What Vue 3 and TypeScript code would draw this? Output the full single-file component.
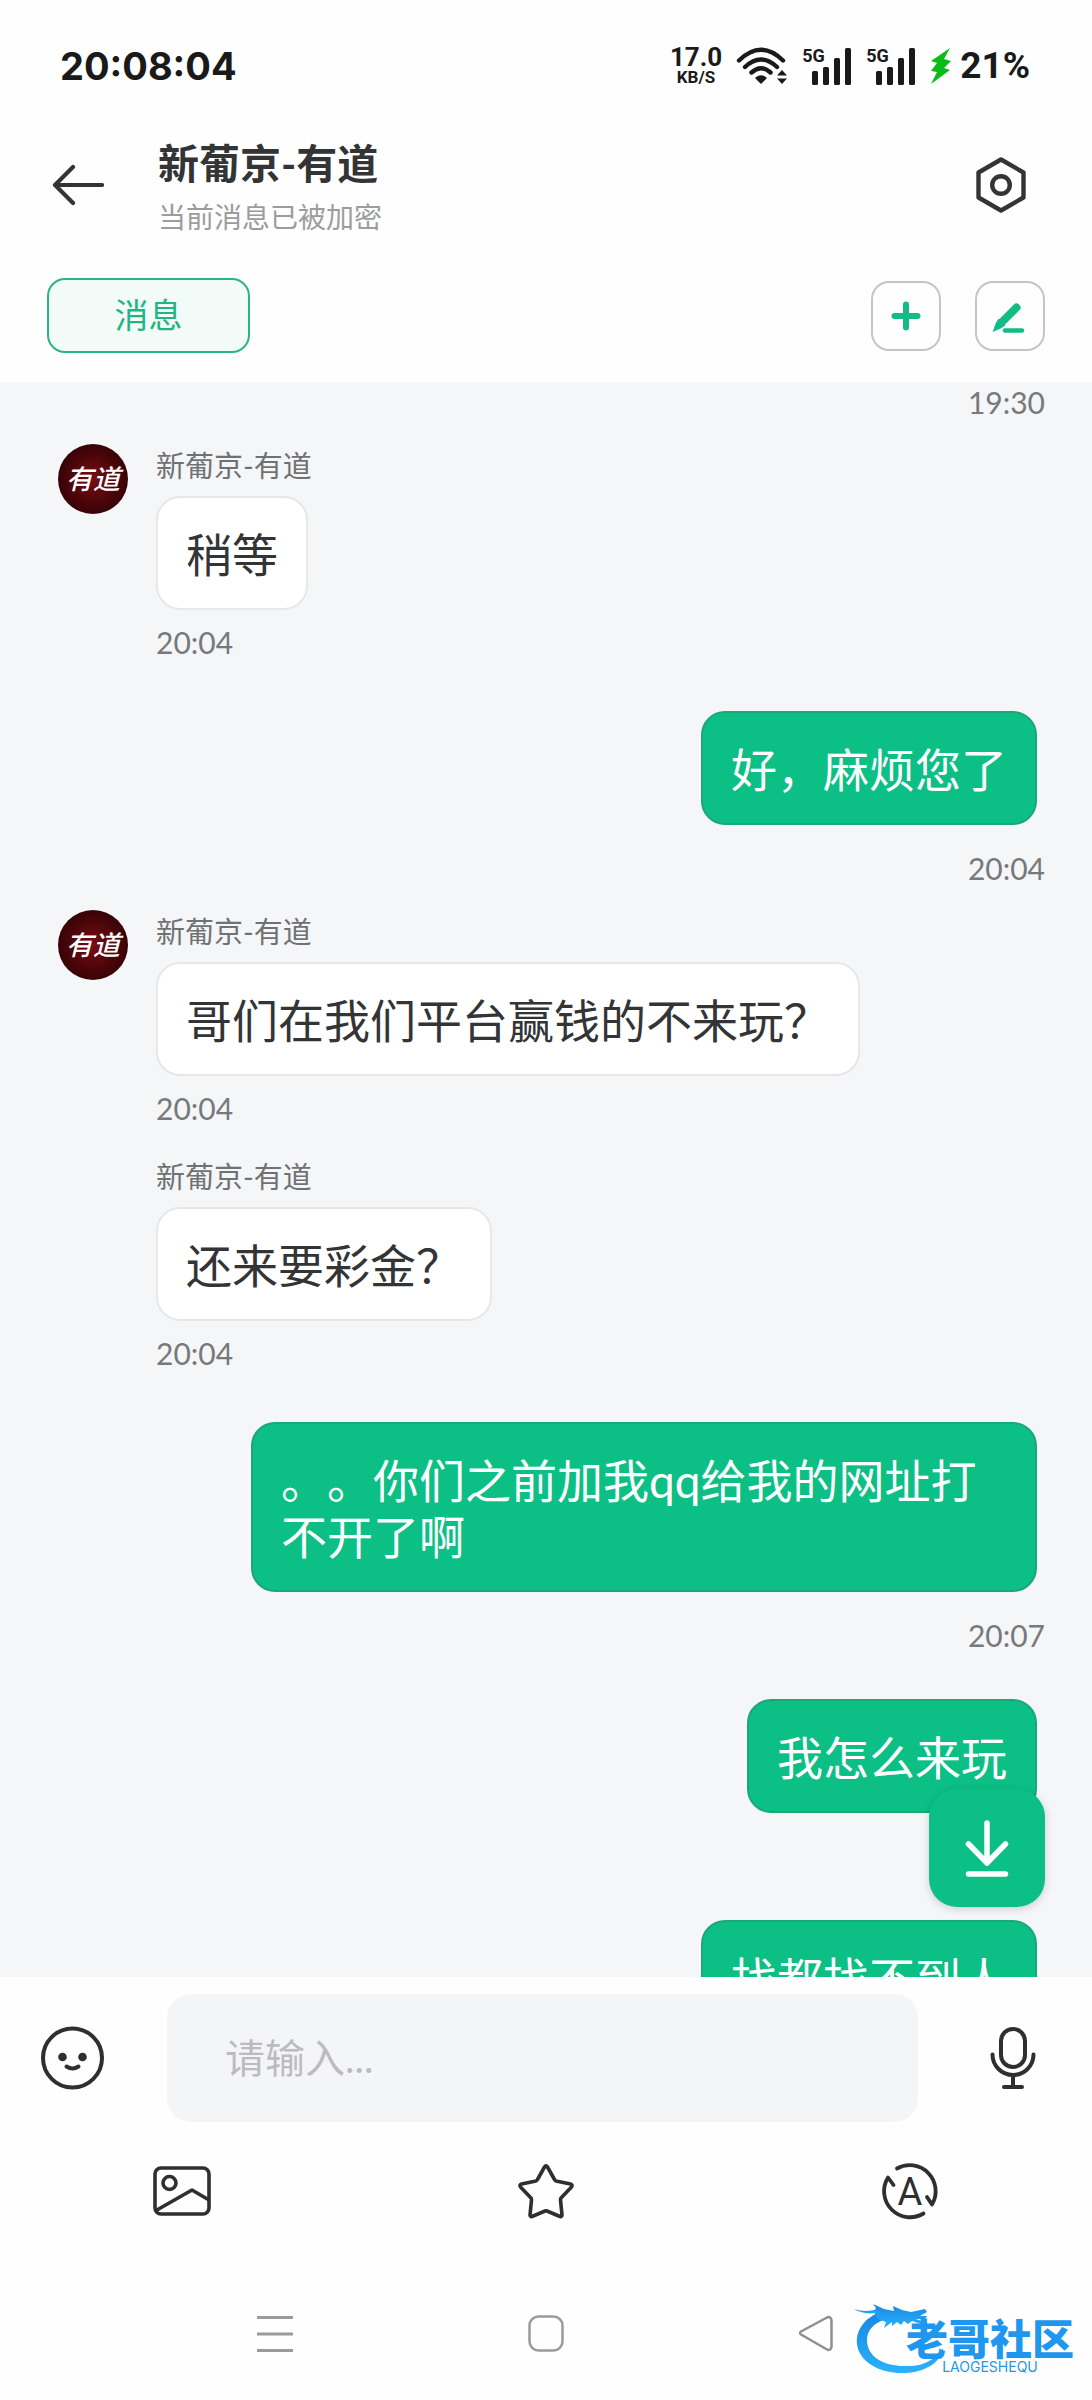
<script setup lang="ts">
import { ref } from 'vue'

interface Message {
  id: number
  side: 'in' | 'out'
  text?: string
  time?: string
  avatar?: boolean
}

const contact = '新葡京-有道'
const draft = ref('')

const messages: Message[] = [
  { id: 1, side: 'out', time: '19:30' },
  { id: 2, side: 'in', text: '稍等', time: '20:04', avatar: true },
  { id: 3, side: 'out', text: '好，麻烦您了', time: '20:04' },
  { id: 4, side: 'in', text: '哥们在我们平台赢钱的不来玩？', time: '20:04', avatar: true },
  { id: 5, side: 'in', text: '还来要彩金？', time: '20:04' },
  { id: 6, side: 'out', text: '。。你们之前加我qq给我的网址打不开了啊', time: '20:07' },
  { id: 7, side: 'out', text: '我怎么来玩' },
  { id: 8, side: 'out', text: '找都找不到人' },
]
</script>

<template>
  <div class="app">
    <div class="status">
      <time class="clock">20:08:04</time>
      <div class="indicators">
        <div class="speed"><b>17.0</b><small>KB/S</small></div>
        <svg width="52" height="38" viewBox="0 0 52 38" fill="none" stroke="#1a1a1a" stroke-width="4.4" stroke-linecap="round">
          <path d="M3 13.5Q25 -8 47 13.5M9 20Q25 5 41 20M15.500 25.500Q25 17 34.500 25.500" />
          <path d="M20 31Q25 27 30 31L25 36Z" fill="#1a1a1a" stroke-width="1.500" stroke-linejoin="round" />
          <path d="M41 28.500L46 23l5 5.500zM41 31.500h10L46 37z" fill="#1a1a1a" stroke="none" />
        </svg>
        <div v-for="n in 2" :key="n" class="signal">
          <svg width="50" height="38" viewBox="0 0 50 38" fill="#1a1a1a">
            <rect x="10" y="24" width="6" height="14" rx="1.500" />
            <rect x="21" y="20" width="6" height="18" rx="1.500" />
            <rect x="32" y="11" width="6" height="27" rx="1.500" />
            <rect x="43" y="1" width="6" height="37" rx="1.500" />
          </svg>
          <span class="gen">5G</span>
        </div>
        <div class="power">
          <svg width="22" height="36" viewBox="0 0 22 36" fill="#09bd16">
            <path d="M20 0L1 13l6 2-6 8 6 1-6 12 19-14-6-2 7-7-7-2z" />
          </svg>
          <span class="battery">21%</span>
        </div>
      </div>
    </div>

    <header class="header">
      <button class="icon" aria-label="返回">
        <svg width="52" height="42" viewBox="0 0 52 42" fill="none" stroke="#333436" stroke-width="4.200" stroke-linecap="round" stroke-linejoin="round">
          <path d="M50 21H3M21 3L3 21l18 18" />
        </svg>
      </button>
      <div class="heading">
        <h1>{{ contact }}</h1>
        <p>当前消息已被加密</p>
      </div>
      <button class="icon" aria-label="设置">
        <svg width="52" height="56" viewBox="0 0 52 56" fill="none" stroke="#333436" stroke-width="4.400" stroke-linejoin="round">
          <path d="M26 2.500L48.500 15.500V40.500L26 53.500L3.500 40.500V15.500Z" />
          <circle cx="26" cy="28" r="8.800" />
        </svg>
      </button>
    </header>

    <nav class="tabs">
      <button class="tab">消息</button>
      <button class="square" aria-label="添加">
        <svg width="66" height="66" viewBox="0 0 66 66" stroke="#12bc84" stroke-width="6" stroke-linecap="round">
          <path d="M33 21.500v23M21.500 33h23" />
        </svg>
      </button>
      <button class="square" aria-label="编辑">
        <svg width="66" height="66" viewBox="0 0 66 66" stroke="#12bc84" stroke-linecap="round">
          <path d="M39.500 24.500L25 39" stroke-width="8" />
          <path d="M16.500 48L19.500 39.500L22 36L28 42L24.500 44.500Z" fill="#12bc84" stroke-width="1" stroke-linejoin="round" />
          <path d="M28 47.500h17" stroke-width="4.500" />
        </svg>
      </button>
    </nav>

    <main class="chat">
      <div class="messages">
        <article v-for="m in messages" :key="m.id" class="row" :class="m.side">
          <div v-if="m.side === 'in'" class="side">
            <div v-if="m.avatar" class="avatar">有道</div>
          </div>
          <div class="body">
            <div v-if="m.side === 'in'" class="name">{{ contact }}</div>
            <p v-if="m.text" class="bubble">{{ m.text }}</p>
            <div class="time"><time v-if="m.time">{{ m.time }}</time></div>
          </div>
        </article>
      </div>
      <button class="jump" aria-label="跳到最新">
        <svg width="116" height="118" viewBox="0 0 116 118" fill="none" stroke="#fff" stroke-width="5.500" stroke-linecap="round" stroke-linejoin="round">
          <path d="M58 34v40M39.500 55L58 74l18.500-19M39.500 85h37" />
        </svg>
      </button>
    </main>

    <footer>
      <form class="composer" @submit.prevent>
        <button type="button" class="icon" aria-label="表情">
          <svg width="64" height="64" viewBox="0 0 64 64" fill="none" stroke="#2f2f30" stroke-width="4">
            <circle cx="32.500" cy="32" r="29.500" />
            <circle cx="22.500" cy="31" r="4.300" fill="#2f2f30" stroke="none" />
            <circle cx="42.500" cy="31" r="4.300" fill="#2f2f30" stroke="none" />
            <path d="M26.500 40.500Q32.500 44.500 38.500 40.500" stroke-linecap="round" />
          </svg>
        </button>
        <input v-model="draft" class="field" type="text" placeholder="请输入..." aria-label="消息内容" />
        <button type="button" class="icon" aria-label="语音">
          <svg width="64" height="64" viewBox="0 0 64 64" fill="none" stroke="#2f2f30" stroke-width="4" stroke-linecap="round">
            <rect x="20" y="3" width="24" height="38" rx="12" />
            <path d="M11.500 28.500a20.500 20.500 0 0 0 41 0M32 49v12M23 61h18" />
          </svg>
        </button>
      </form>
      <div class="tools">
        <button class="icon" aria-label="图片">
          <svg width="60" height="52" viewBox="0 0 60 52" fill="none" stroke="#2f2f30" stroke-width="3.600" stroke-linejoin="round">
            <rect x="3" y="3" width="54" height="46" rx="6" />
            <circle cx="17.500" cy="18" r="6.500" />
            <path d="M4 45.500L40 25l17 10" />
          </svg>
        </button>
        <button class="icon" aria-label="收藏">
          <svg width="60" height="60" viewBox="0 0 60 60" fill="none" stroke="#2f2f30" stroke-width="3.600" stroke-linecap="round" stroke-linejoin="round">
            <path d="M28.500 6Q30 3.500 31.500 6L38.500 18.500Q39 19.500 40 20L54.500 23Q57 23.800 55.500 26L45 37Q44.500 37.800 44.500 39L46 54Q45.800 56 44 55.500L31 50Q30 49.600 29 50L16 55.500Q14.200 56 14 54L15.500 39Q15.500 37.800 15 37L4.500 26Q3 23.800 5.500 23L20 20Q21 19.500 21.500 18.500Z" />
          </svg>
        </button>
        <button class="icon" aria-label="翻译">
          <svg width="60" height="60" viewBox="0 0 60 60" fill="none" stroke="#2f2f30" stroke-width="3.800" stroke-linecap="round" stroke-linejoin="round">
            <path d="M17 7.500A26 26 0 0 1 52 43.500L47 36" />
            <path d="M43.500 52.500A26 26 0 0 1 8 16.500L13.500 24" />
            <text x="30" y="44" text-anchor="middle" class="letter">A</text>
          </svg>
        </button>
      </div>
      <div class="system">
        <button class="icon" aria-label="最近任务">
          <svg width="36" height="38" viewBox="0 0 36 38" stroke="#9a9a9a" stroke-width="3"><path d="M0 2.500h36M0 19h36M0 35.500h36" /></svg>
        </button>
        <button class="icon" aria-label="主屏幕">
          <svg width="36" height="38" viewBox="0 0 36 38" fill="none" stroke="#9a9a9a" stroke-width="2.500"><rect x="1.500" y="1.500" width="33" height="34" rx="9" /></svg>
        </button>
        <button class="icon" aria-label="后退">
          <svg width="36" height="38" viewBox="0 0 36 38" fill="none" stroke="#8f8f8f" stroke-width="2.500" stroke-linejoin="round">
            <path d="M2 16.500Q0 18 2 19.500L28 34.500Q32 36 32.500 31.500V5.500Q32 1 28 2.500Z" />
          </svg>
        </button>
      </div>
    </footer>

    <div class="mark">
      <svg class="dragon" width="92" height="70" viewBox="0 0 92 70">
        <defs>
          <linearGradient id="sky" x1="0" y1="0" x2="0" y2="1">
            <stop offset="0" stop-color="#1688e2" />
            <stop offset="1" stop-color="#2bb2fb" />
          </linearGradient>
        </defs>
        <g fill="url(#sky)">
          <path d="M24 9C8 16 2 28 3 40C5 58 26 70 51 69C73 68 88 57 89 44C80 57 68 63 51 62C28 62 13 52 13 36C13 27 19 19 32 15Z" />
          <path d="M20 8L22 4L19 0L30 5L40 7L39 2L48 6L57 8L71 5L73 8L66 12H73L71 15L62 15L73 19L67 20L58 17L54 20L50 17L47 21L43 18L38 22L38 18L30 24L32 18L24 15Z" />
          <path d="M0 5Q12 9 24 5L27 8Q12 12 0 5Z" />
        </g>
      </svg>
      <div class="brand"><strong>老哥社区</strong><small>LAOGESHEQU</small></div>
    </div>
  </div>
</template>

<style>
body {
  margin: 0;
}
</style>

<style scoped>
.app {
  position: relative;
  display: flex;
  flex-direction: column;
  height: 100vh;
  background: #fefefe;
  color: #333436;
  font-family: Lato, "Noto Sans CJK SC", sans-serif;
  text-spacing-trim: space-all;
}
h1,
p {
  margin: 0;
}
svg {
  display: block;
}
button {
  padding: 0;
  border: 0;
  background: none;
  color: inherit;
  font: inherit;
  cursor: pointer;
}

.status {
  display: flex;
  align-items: center;
  justify-content: space-between;
  box-sizing: border-box;
  height: 124px;
  padding: 8px 62px 0 60px;
  color: #1a1a1a;
}
.clock {
  font: 700 38px/48px Inter, sans-serif;
}
.indicators {
  display: flex;
  align-items: center;
  gap: 14px;
}
.speed {
  display: flex;
  flex-direction: column;
  align-items: center;
  font-family: Roboto, sans-serif;
}
.speed b {
  font-size: 26px;
  line-height: 22px;
}
.speed small {
  font-size: 17px;
  font-weight: 700;
  line-height: 18px;
}
.signal {
  position: relative;
}
.gen {
  position: absolute;
  top: 0;
  left: 0;
  font: 700 18px/18px Roboto, sans-serif;
}
.power {
  display: flex;
  align-items: center;
  gap: 8px;
}
.battery {
  font: 700 37px/48px Roboto, sans-serif;
}

.header {
  display: flex;
  align-items: center;
  gap: 54px;
  height: 122px;
  padding: 0 65px 0 52px;
}
.heading {
  flex: 1;
}
.heading h1 {
  font-size: 41px;
  font-weight: 700;
  line-height: 64px;
}
.heading p {
  color: #9c9c9c;
  font-size: 28px;
  line-height: 42px;
}

.tabs {
  display: flex;
  align-items: center;
  gap: 34px;
  padding: 32px 47px 29px;
}
.tab {
  width: 203px;
  height: 75px;
  margin-right: auto;
  padding-bottom: 4px;
  border: 2px solid #2bb485;
  border-radius: 18px;
  background: #f2fbf8;
  color: #22b583;
  font-size: 34px;
}
.square {
  width: 70px;
  height: 70px;
  border: 2px solid #c4c4c9;
  border-radius: 18px;
}

.chat {
  position: relative;
  flex: 1;
  min-height: 0;
  background: #f4f6f8;
}
.messages {
  height: 100%;
  overflow: hidden;
}
.row {
  display: flex;
}
.in {
  gap: 28px;
  padding: 25px 58px 5px;
}
.out {
  justify-content: flex-end;
  padding: 47px 47px 0;
}
.row:first-child {
  padding-top: 3px;
}
.side {
  flex: none;
  width: 70px;
}
.avatar {
  width: 70px;
  height: 70px;
  border-radius: 50%;
  background: radial-gradient(circle, #7a0d14 0%, #4a0509 50%, #1c0103 100%);
  color: #fff;
  font-size: 27px;
  font-style: italic;
  font-weight: 500;
  line-height: 70px;
  text-align: center;
}
.body {
  display: flex;
  flex-direction: column;
  align-items: flex-start;
}
.out .body {
  align-items: flex-end;
}
.name {
  margin-bottom: 8px;
  color: #707173;
  font-size: 29px;
  line-height: 44px;
}
.bubble {
  box-sizing: border-box;
  max-width: 786px;
  padding: 29px 28px 25px;
  border: 2px solid #e6e7e9;
  border-radius: 24px;
  background: #fff;
  font-size: 46px;
  line-height: 56px;
}
.out .bubble {
  margin-right: 8px;
  border-color: #1aa878;
  background: #0cbf85;
  color: #fff;
}
.time {
  height: 34px;
  margin-top: 15px;
  color: #77797b;
  font-size: 30px;
  line-height: 34px;
}
.out .time {
  margin-top: 26px;
}
.row:first-child .time {
  margin-top: 0;
}
.jump {
  position: absolute;
  right: 47px;
  bottom: 70px;
  border-radius: 28px;
  background: #0cbf85;
  box-shadow: 0 2px 8px rgba(0, 0, 0, 0.16);
}

.composer {
  display: flex;
  align-items: center;
  gap: 63px;
  padding: 17px 47px 0 40px;
}
.field {
  box-sizing: border-box;
  flex: 1;
  min-width: 0;
  height: 128px;
  padding: 0 58px;
  border: 0;
  border-radius: 24px;
  outline: 0;
  background: #f4f5f7;
  color: #333436;
  font: inherit;
  font-size: 40px;
}
.field::placeholder {
  color: #bcbcbf;
}
.tools {
  display: grid;
  grid-template-columns: repeat(3, 1fr);
  align-items: center;
  justify-items: center;
  height: 138px;
}
.letter {
  fill: #2f2f30;
  stroke: none;
  font: 400 38px Roboto, sans-serif;
}
.system {
  display: flex;
  align-items: center;
  justify-content: center;
  gap: 235px;
  box-sizing: border-box;
  height: 140px;
  padding-top: 7px;
}

.mark {
  position: absolute;
  right: 14px;
  bottom: 26px;
  width: 224px;
  height: 70px;
}
.brand {
  position: absolute;
  top: 14px;
  right: 4px;
  display: flex;
  flex-direction: column;
  align-items: center;
  color: #1f97ee;
}
.brand strong {
  font-size: 42px;
  font-weight: 900;
  line-height: 42px;
}
.brand small {
  font: 14px/14px Inter, sans-serif;
}
</style>
